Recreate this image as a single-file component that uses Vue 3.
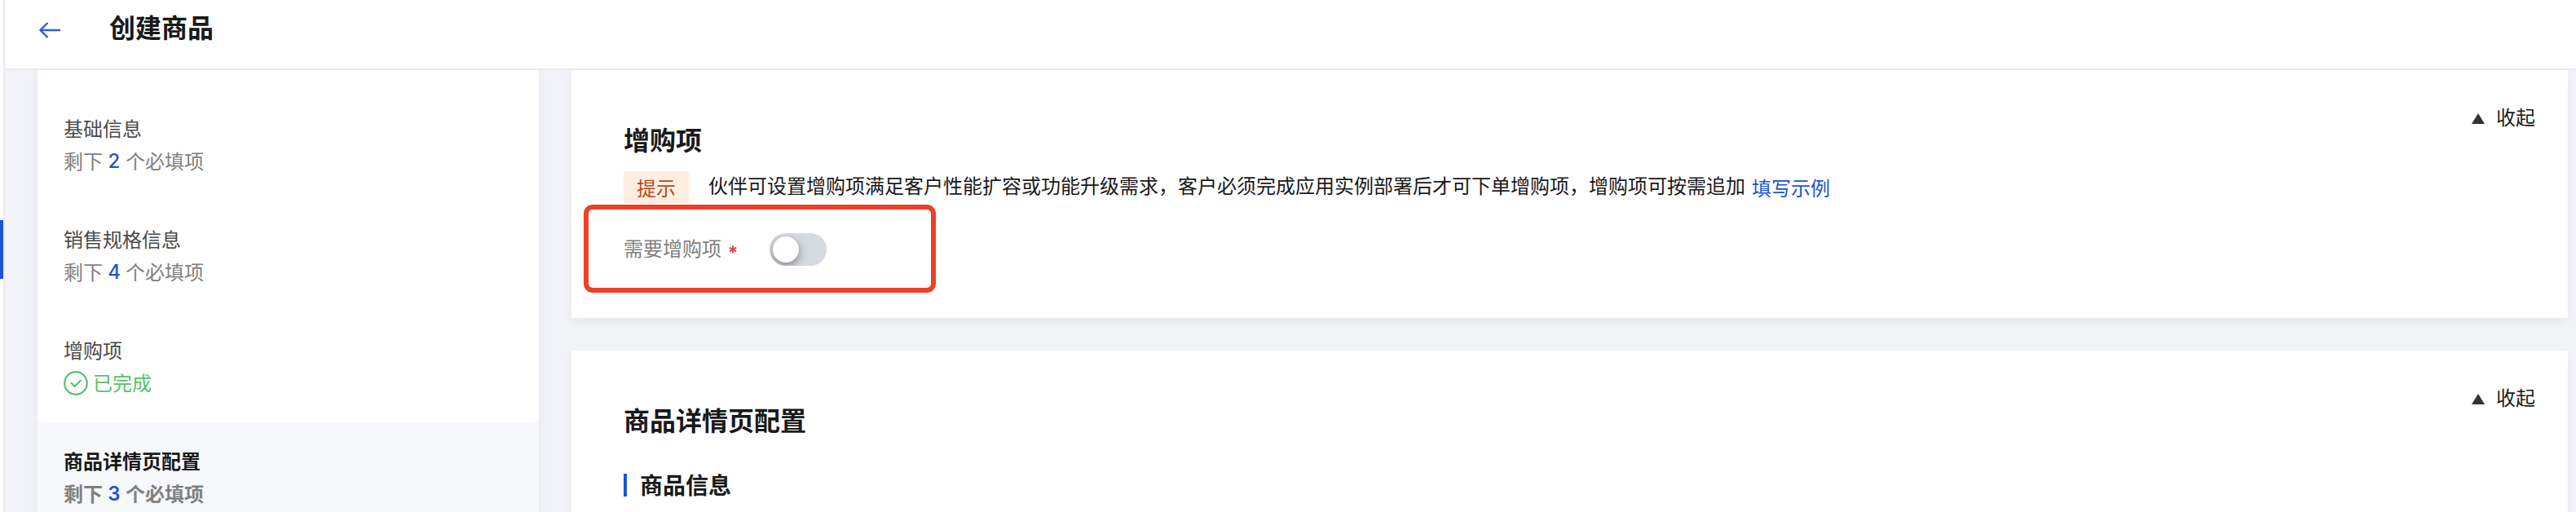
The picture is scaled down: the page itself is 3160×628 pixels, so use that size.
<template>
  <div class="page">
    <header class="topbar">
      <a class="back" href="#" aria-label="返回">
        <svg width="28" height="22" viewBox="0 0 28 22" fill="none">
          <path d="M26 11H1.5M10.5 2L1.5 11L10.5 20" stroke="#2b60dd" stroke-width="2.4" />
        </svg>
      </a>
      <h1>创建商品</h1>
    </header>

    <div class="body">
      <div class="rail">
        <span class="rail-mark"></span>
      </div>

      <aside class="steps">
        <div v-for="(s, i) in steps" :key="s.title" :class="['step', { active: i === activeIndex }]">
          <div class="step-title">{{ s.title }}</div>
          <div v-if="s.left" class="step-sub">
            <span>剩下</span><b>{{ s.left }}</b><span>个必填项</span>
          </div>
          <div v-else class="step-done">
            <svg width="30" height="30" viewBox="0 0 30 30" fill="none" stroke="#5abf6b">
              <circle cx="15" cy="15" r="13.8" stroke-width="2.2" />
              <path d="M9 14.3L13.7 19L21.5 11" stroke-width="2.2" />
            </svg>
            <span>已完成</span>
          </div>
        </div>
      </aside>

      <main class="content">
        <section class="card addon">
          <div class="card-head">
            <h2>增购项</h2>
            <div class="collapse"><i class="tri"></i><span>收起</span></div>
          </div>
          <div class="tip">
            <span class="tag">提示</span>
            <span class="tip-text">伙伴可设置增购项满足客户性能扩容或功能升级需求，客户必须完成应用实例部署后才可下单增购项，增购项可按需追加</span>
            <a class="link" href="#">填写示例</a>
          </div>
          <div class="field">
            <span class="label">需要增购项</span>
            <svg class="star" width="10" height="10" viewBox="0 0 10 10" stroke="#e54545" stroke-width="2">
              <path d="M5 0.4V9.6M0.8 2.6L9.2 7.4M9.2 2.6L0.8 7.4" />
            </svg>
            <button :class="['switch', { on: needAddon }]" @click="needAddon = !needAddon" aria-label="需要增购项">
              <span class="knob"></span>
            </button>
            <div class="mark"></div>
          </div>
        </section>

        <section class="card">
          <div class="card-head">
            <h2>商品详情页配置</h2>
            <div class="collapse"><i class="tri"></i><span>收起</span></div>
          </div>
          <h3>商品信息</h3>
        </section>
      </main>
    </div>
  </div>
</template>

<script setup>
import { ref } from "vue";

const steps = [
  { title: "基础信息", left: 2 },
  { title: "销售规格信息", left: 4 },
  { title: "增购项", left: 0 },
  { title: "商品详情页配置", left: 3 },
];

const activeIndex = 3;
const needAddon = ref(false);
</script>

<style>
body {
  margin: 0;
}
</style>

<style scoped>
.page {
  height: 628px;
  overflow: hidden;
  display: flex;
  flex-direction: column;
  background: #f2f3f8;
  color: #191919;
  font-family: "Noto Sans CJK SC", sans-serif;
  font-size: 24px;
  line-height: 40px;
}

a {
  text-decoration: none;
}

h1,
h2,
h3 {
  margin: 0;
  font-weight: 700;
}

.topbar {
  flex: none;
  box-sizing: border-box;
  height: 86px;
  margin-left: 4px;
  padding: 0 0 16px 42px;
  display: flex;
  align-items: center;
  background: #fff;
  border-left: 2px solid #e9e9f0;
  border-bottom: 2px solid #e9e9f0;
  box-shadow: -4px 0 #fff;
}

.back {
  display: flex;
  width: 86px;
  padding-top: 6px;
}

.topbar h1 {
  padding-bottom: 3px;
  font-size: 32px;
  line-height: 45px;
}

.body {
  flex: 1;
  min-height: 0;
  display: flex;
  overflow: hidden;
}

.rail {
  width: 4px;
  background: #fff;
  border-right: 2px solid #e9e9f0;
}

.rail-mark {
  display: block;
  height: 72px;
  margin-top: 184px;
  background: #1c54d4;
}

/* left step list */
.steps {
  flex: none;
  width: 615px;
  margin-left: 40px;
  padding-top: 24px;
  background: #fff;
  box-shadow: 0 4px 12px rgba(40, 40, 80, 0.05);
  box-sizing: border-box;
}

.step {
  height: 136px;
  box-sizing: border-box;
  padding: 27px 32px;
}

.step.active {
  background: #f7f8fc;
}

.step-title {
  color: #4a4a4a;
}

.active .step-title {
  color: #191919;
  font-weight: 700;
}

.step-sub {
  display: flex;
  color: #808080;
}

.step-sub b {
  width: 28px;
  text-align: center;
  color: #1c54d4;
  font-family: Inter, sans-serif;
  font-size: 24px;
  font-weight: 500;
  line-height: 42px;
}

.active .step-sub,
.active .step-sub b {
  font-weight: 600;
}

.step-done {
  display: flex;
  align-items: center;
  gap: 6px;
  color: #5abf6b;
}

.step-done svg {
  margin-top: 2px;
}

/* right column */
.content {
  flex: 1;
  margin: 0 10px 0 40px;
  display: flex;
  flex-direction: column;
  gap: 40px;
}

.card {
  flex: none;
  height: 304px;
  box-sizing: border-box;
  padding: 38px 40px 0 64px;
  background: #fff;
  box-shadow: 0 4px 12px rgba(40, 40, 80, 0.05);
}

.card-head {
  display: flex;
  justify-content: space-between;
  align-items: flex-start;
}

.card-head h2 {
  margin-top: 24px;
  padding-bottom: 4px;
  font-size: 32px;
  line-height: 44px;
}

.collapse {
  display: flex;
  align-items: center;
  gap: 14px;
}

.collapse span {
  padding-bottom: 2px;
  line-height: 38px;
}

.tri {
  margin-top: 3px;
  border: 8px solid transparent;
  border-top: 0;
  border-bottom: 13px solid #333;
}

.tip {
  display: flex;
  margin-top: 14px;
}

.tag {
  padding: 0 16px;
  border-radius: 4px;
  background: #fdeee2;
  color: #b8481b;
}

.tip-text {
  margin-left: 24px;
  line-height: 34px;
}

.link {
  margin-left: 8px;
  line-height: 39px;
  color: #1c54d4;
}

.field {
  position: relative;
  display: flex;
  align-items: center;
  height: 40px;
  margin-top: 36px;
}

.label {
  padding-bottom: 4px;
  color: #808080;
  line-height: 36px;
}

.star {
  margin-left: 9px;
}

.switch {
  width: 70px;
  height: 40px;
  margin-left: 40px;
  padding: 4px;
  border: none;
  border-radius: 20px;
  background: #d6dae1;
  overflow: hidden;
  cursor: pointer;
}

.switch.on {
  background: #1c54d4;
}

.knob {
  display: block;
  width: 32px;
  height: 32px;
  border-radius: 50%;
  background: #fff;
  box-shadow: 0 4px 12px rgba(0, 0, 0, 0.4);
}

.switch.on .knob {
  margin-left: 30px;
}

/* red highlight around the field */
.mark {
  position: absolute;
  left: -49px;
  top: -35px;
  width: 432px;
  height: 108px;
  box-sizing: border-box;
  border: 6px solid #ef3f25;
  border-radius: 11px;
  pointer-events: none;
}

h3 {
  height: 28px;
  margin-top: 41px;
  padding-left: 16px;
  border-left: 4px solid #1c54d4;
  font-size: 28px;
  line-height: 26px;
}
</style>
